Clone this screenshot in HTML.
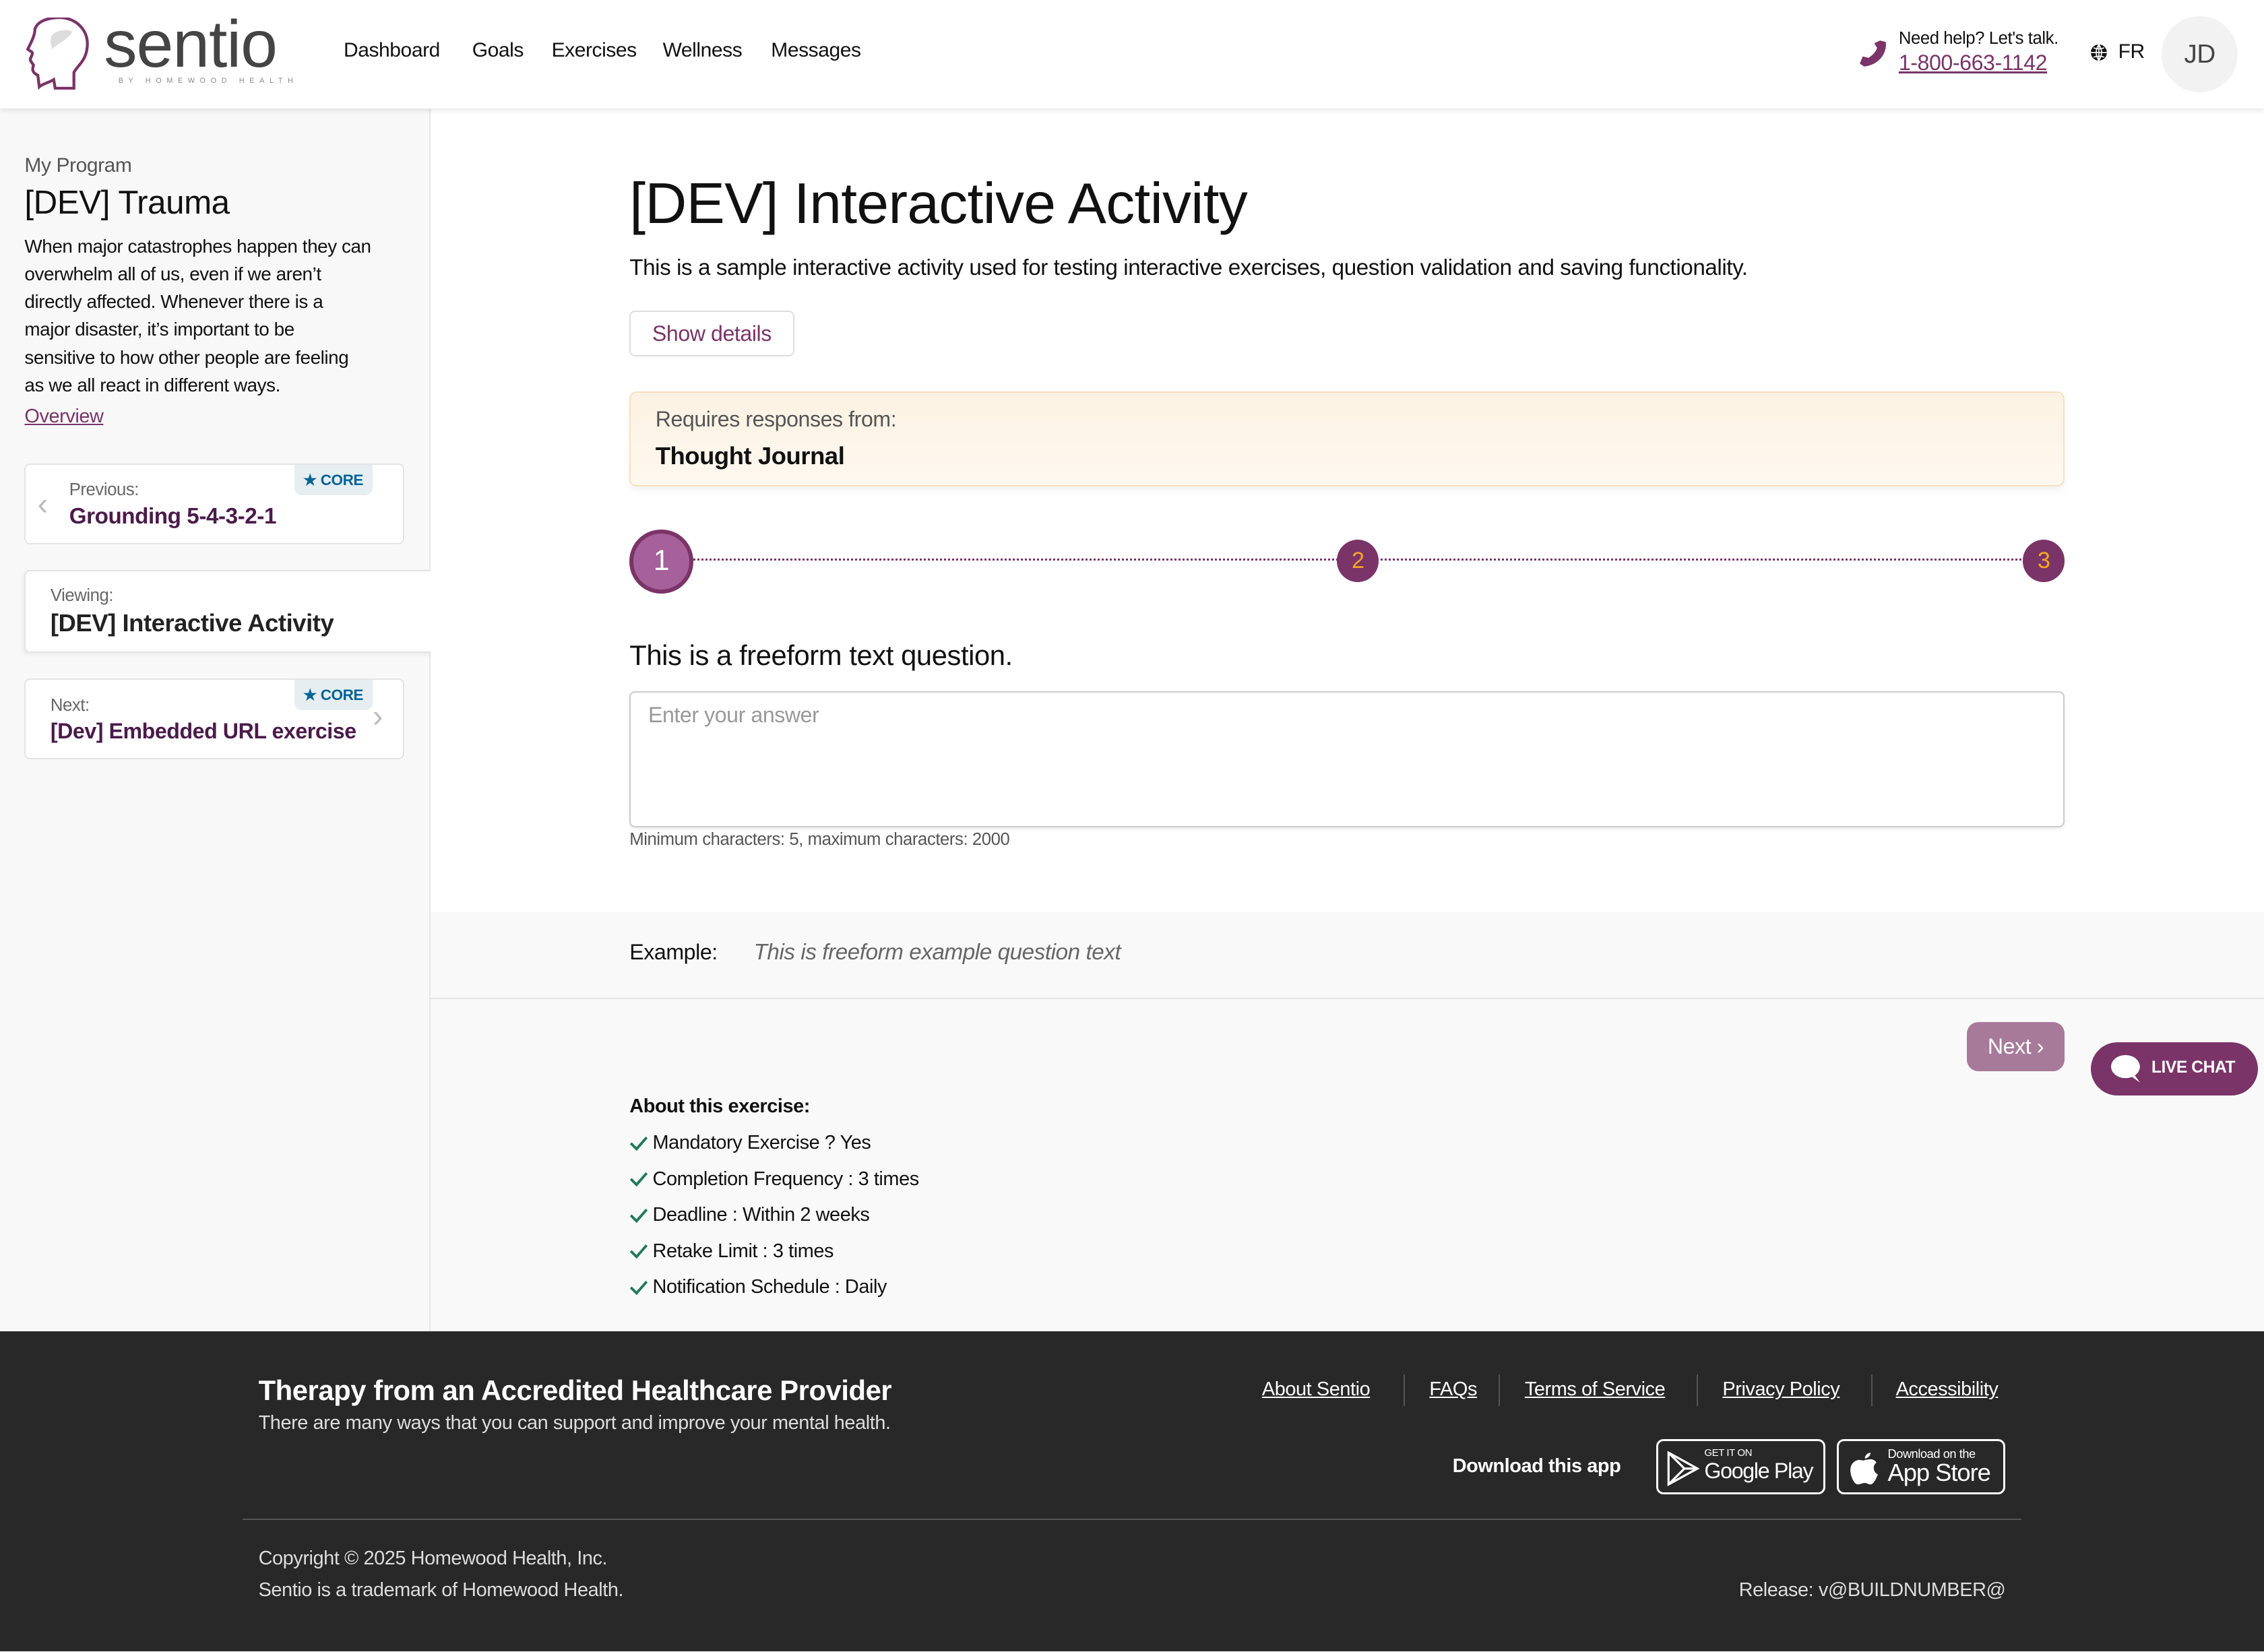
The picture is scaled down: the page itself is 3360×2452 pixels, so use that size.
<!DOCTYPE html>
<html><head><meta charset="utf-8">
<style>
html{zoom:2.142857}
*{box-sizing:border-box;margin:0;padding:0}
body{width:1568px;height:1144px;position:relative;overflow:hidden;font-family:"Liberation Sans",sans-serif;color:#222;background:#fff;letter-spacing:-0.2px}
.a{position:absolute;white-space:nowrap}
.hdr{position:absolute;left:0;top:0;width:1568px;height:75px;background:#fff;box-shadow:0 2px 3px rgba(0,0,0,.08);z-index:2}
.nav{font-size:14px;color:#111;top:27px}
.side{position:absolute;left:0;top:75px;width:298px;height:847px;background:#f8f8f8;border-right:1px solid #e6e6e6}
.card{position:absolute;background:#fff;border:1px solid #e4e4e4;border-radius:4px}
.core{position:absolute;right:21px;top:0;width:54px;height:21px;background:#e6eef2;border-radius:0 0 5px 5px;color:#006494;font-size:10.5px;font-weight:bold;line-height:21px;padding-left:6px}
.lbl{font-size:12px;color:#666}
.ttl{font-size:15.5px;font-weight:bold;color:#4a1b4a}
.main{position:absolute;left:298px;top:75px;width:1270px;height:847px;background:#fff}
.foot{position:absolute;left:0;top:922px;width:1568px;height:222px;background:#282828;color:#fff}
.fl{font-size:13.5px;text-decoration:underline;color:#fff;top:33px}
.sep{position:absolute;top:30px;width:1px;height:22px;background:#555}
.chk{font-size:13.5px;color:#111}
.chk svg{vertical-align:-2px;margin-right:3px}
</style></head><body>
<div class="hdr">
 <svg class="a" style="left:18px;top:12px" width="46" height="50" viewBox="0 0 46 50"><path d="M9 48 L8 40 C4 38 4 36 5 33 L3 30 C2 28 5 26 4 24 L1 22 C4 16 6 12 6 8 C8 2 16 0 24 0 C36 1 44 10 42 22 C41 30 35 34 33 38 L33 49 L20 49 L19 43 C16 45 11 46 9 48Z" fill="none" stroke="#7a3468" stroke-width="2"/><path d="M18 12 C22 8 30 8 32 10 C28 16 22 18 18 22 C17 18 16 15 18 12Z" fill="#ddd"/></svg>
 <div class="a" style="left:72px;top:4px;font-size:46px;color:#444;letter-spacing:-0.5px">sentio</div>
 <div class="a" style="left:82px;top:53px;font-size:5px;color:#888;letter-spacing:3.6px">BY HOMEWOOD HEALTH</div>
 <div class="a nav" style="left:238px">Dashboard</div>
 <div class="a nav" style="left:327px">Goals</div>
 <div class="a nav" style="left:382px">Exercises</div>
 <div class="a nav" style="left:459px">Wellness</div>
 <div class="a nav" style="left:534px">Messages</div>
 <svg class="a" style="left:1287px;top:27px" width="20" height="20" viewBox="0 0 20 20"><path d="M15 1 L19 2 C20 10 14 18 4 19 L1 17 L3 12 L7 13 C10 11 12 9 13 6 L11 3Z" fill="#7a3468"/></svg>
 <div class="a" style="left:1315px;top:20px;font-size:12px;color:#111">Need help? Let's talk.</div>
 <div class="a" style="left:1315px;top:35px;font-size:15px;color:#7a3468;text-decoration:underline">1-800-663-1142</div>
 <svg class="a" style="left:1447px;top:30px" width="13" height="13" viewBox="0 0 14 14"><circle cx="7" cy="7" r="6" fill="#111"/><path d="M1 7H13M7 1V13M3 3.5Q7 5 11 3.5M3 10.5Q7 9 11 10.5M7 1Q3 7 7 13M7 1Q11 7 7 13" stroke="#fff" stroke-width=".8" fill="none"/></svg>
 <div class="a" style="left:1467px;top:28px;font-size:14px;color:#111">FR</div>
 <div class="a" style="left:1497px;top:11px;width:53px;height:53px;border-radius:50%;background:#f2f2f2;font-size:18px;color:#444;text-align:center;line-height:53px">JD</div>
</div>

<div class="side">
 <div class="a" style="left:17px;top:32px;font-size:14px;color:#555">My Program</div>
 <div class="a" style="left:17px;top:52px;font-size:23px;color:#111">[DEV] Trauma</div>
 <div class="a" style="left:17px;top:86px;font-size:13px;line-height:19.2px;color:#111">When major catastrophes happen they can<br>overwhelm all of us, even if we aren’t<br>directly affected. Whenever there is a<br>major disaster, it’s important to be<br>sensitive to how other people are feeling<br>as we all react in different ways.</div>
 <div class="a" style="left:17px;top:206px;font-size:13.5px;color:#7a3468;text-decoration:underline">Overview</div>
 <div class="card" style="left:17px;top:246px;width:263px;height:56px">
  <div class="core">★ CORE</div>
  <div class="a" style="left:8px;top:14px;font-size:22px;color:#bbb">‹</div>
  <div class="a lbl" style="left:30px;top:11px">Previous:</div>
  <div class="a ttl" style="left:30px;top:27px">Grounding 5-4-3-2-1</div>
 </div>
 <div class="card" style="left:17px;top:320px;width:282px;height:57px;border-right:none;border-radius:4px 0 0 4px;box-shadow:-1px 1px 3px rgba(0,0,0,.06)">
  <div class="a lbl" style="left:17px;top:10px">Viewing:</div>
  <div class="a" style="left:17px;top:26px;font-size:17px;font-weight:bold;color:#222">[DEV] Interactive Activity</div>
 </div>
 <div class="card" style="left:17px;top:395px;width:263px;height:56px">
  <div class="core">★ CORE</div>
  <div class="a lbl" style="left:17px;top:11px">Next:</div>
  <div class="a ttl" style="left:17px;top:27px;font-size:15px">[Dev] Embedded URL exercise</div>
  <div class="a" style="left:240px;top:12px;font-size:22px;color:#bbb">›</div>
 </div>
</div>

<div class="main">
 <div class="a" style="left:138px;top:43px;font-size:40px;color:#111;letter-spacing:-0.3px">[DEV] Interactive Activity</div>
 <div class="a" style="left:138px;top:102px;font-size:15.5px;color:#111">This is a sample interactive activity used for testing interactive exercises, question validation and saving functionality.</div>
 <div class="a" style="left:138px;top:140px;width:114px;height:32px;border:1px solid #ddd;border-radius:4px;font-size:15px;color:#7a3468;line-height:30px;text-align:center">Show details</div>
 <div class="a" style="left:138px;top:196px;width:994px;height:66px;border:1px solid #f6e0c0;border-radius:5px;background:linear-gradient(#fcf2e3,#fff8ef);box-shadow:0 3px 5px rgba(0,0,0,.05)">
  <div class="a" style="left:17px;top:10px;font-size:15px;color:#555">Requires responses from:</div>
  <div class="a" style="left:17px;top:34px;font-size:17px;font-weight:bold;color:#111">Thought Journal</div>
 </div>
 <div class="a" style="left:180px;top:312px;width:950px;border-top:1.5px dotted #7a3468"></div>
 <div class="a" style="left:138px;top:292px;width:44px;height:44px;border-radius:50%;background:#a6609a;border:3px solid #7a3468;color:#fff;font-size:20px;text-align:center;line-height:38px">1</div>
 <div class="a" style="left:628px;top:299px;width:29px;height:29px;border-radius:50%;background:#7a3468;color:#f5a623;font-size:16px;text-align:center;line-height:29px">2</div>
 <div class="a" style="left:1103px;top:299px;width:29px;height:29px;border-radius:50%;background:#7a3468;color:#f5a623;font-size:16px;text-align:center;line-height:29px">3</div>
 <div class="a" style="left:138px;top:368px;font-size:19.5px;color:#111">This is a freeform text question.</div>
 <div class="a" style="left:138px;top:404px;width:994px;height:94px;border:1px solid #ccc;border-radius:4px;box-shadow:0 1px 2px rgba(0,0,0,.08)">
  <div class="a" style="left:12px;top:7px;font-size:15px;color:#999">Enter your answer</div>
 </div>
 <div class="a" style="left:138px;top:500px;font-size:12px;color:#555">Minimum characters: 5, maximum characters: 2000</div>
 <div class="a" style="left:0;top:557px;width:1270px;height:290px;background:#f9f9f9"></div>
 <div class="a" style="left:0;top:616px;width:1270px;height:1px;background:#e6e6e6"></div>
 <div class="a" style="left:138px;top:576px;font-size:15px;color:#111">Example:</div>
 <div class="a" style="left:224px;top:576px;font-size:15.5px;color:#666;font-style:italic">This is freeform example question text</div>
 <div class="a" style="left:1064px;top:633px;width:68px;height:34px;border-radius:8px;background:#a87a9a;color:#fff;font-size:15px;text-align:center;line-height:34px">Next ›</div>
 <div class="a" style="left:138px;top:684px;font-size:13.5px;font-weight:bold;color:#111">About this exercise:</div>
 <div class="a chk" style="left:138px;top:709px"><svg width="13" height="12" viewBox="0 0 13 12"><path d="M1 6L5 10L12 2" stroke="#1f7a5a" stroke-width="1.8" fill="none"/></svg>Mandatory Exercise ? Yes</div>
 <div class="a chk" style="left:138px;top:734px"><svg width="13" height="12" viewBox="0 0 13 12"><path d="M1 6L5 10L12 2" stroke="#1f7a5a" stroke-width="1.8" fill="none"/></svg>Completion Frequency : 3 times</div>
 <div class="a chk" style="left:138px;top:759px"><svg width="13" height="12" viewBox="0 0 13 12"><path d="M1 6L5 10L12 2" stroke="#1f7a5a" stroke-width="1.8" fill="none"/></svg>Deadline : Within 2 weeks</div>
 <div class="a chk" style="left:138px;top:784px"><svg width="13" height="12" viewBox="0 0 13 12"><path d="M1 6L5 10L12 2" stroke="#1f7a5a" stroke-width="1.8" fill="none"/></svg>Retake Limit : 3 times</div>
 <div class="a chk" style="left:138px;top:809px"><svg width="13" height="12" viewBox="0 0 13 12"><path d="M1 6L5 10L12 2" stroke="#1f7a5a" stroke-width="1.8" fill="none"/></svg>Notification Schedule : Daily</div>
</div>

<div class="a" style="left:1448px;top:722px;width:116px;height:37px;border-radius:19px;background:#7a3468;z-index:3">
 <svg class="a" style="left:14px;top:9px" width="22" height="20" viewBox="0 0 22 20"><ellipse cx="10" cy="8" rx="10" ry="8" fill="#fff"/><path d="M13 14L20 19L15 12Z" fill="#fff"/></svg>
 <div class="a" style="left:42px;top:11px;font-size:11.5px;font-weight:bold;color:#fff">LIVE CHAT</div>
</div>

<div class="foot">
 <div class="a" style="left:179px;top:30px;font-size:19.5px;font-weight:bold">Therapy from an Accredited Healthcare Provider</div>
 <div class="a" style="left:179px;top:56px;font-size:13.5px;color:#ddd">There are many ways that you can support and improve your mental health.</div>
 <div class="a fl" style="left:874px">About Sentio</div>
 <div class="sep" style="left:972px"></div>
 <div class="a fl" style="left:990px">FAQs</div>
 <div class="sep" style="left:1038px"></div>
 <div class="a fl" style="left:1056px">Terms of Service</div>
 <div class="sep" style="left:1175px"></div>
 <div class="a fl" style="left:1193px">Privacy Policy</div>
 <div class="sep" style="left:1296px"></div>
 <div class="a fl" style="left:1313px">Accessibility</div>
 <div class="a" style="left:1006px;top:86px;font-size:13.5px;font-weight:bold">Download this app</div>
 <div class="a" style="left:1147px;top:75px;width:117px;height:38px;border:1.5px solid #fff;border-radius:5px">
  <svg class="a" style="left:5px;top:7px" width="24" height="24" viewBox="0 0 24 24"><path d="M2 1L2 23L22 12Z M2 1L13 12L2 23 M13 12L22 12" stroke="#fff" stroke-width="1.5" fill="none"/></svg>
  <div class="a" style="left:32px;top:4px;font-size:7px">GET IT ON</div>
  <div class="a" style="left:32px;top:12px;font-size:15px;letter-spacing:-0.6px">Google Play</div>
 </div>
 <div class="a" style="left:1272px;top:75px;width:117px;height:38px;border:1.5px solid #fff;border-radius:5px">
  <svg class="a" style="left:7px;top:7px" width="22" height="24" viewBox="0 0 22 24"><path d="M11 6C13 6 15 5 17 6C19 7 19 8 19 8C16 10 17 15 20 16C19 19 17 23 15 23C13 23 13 22 11 22C9 22 8 23 6 23C4 23 1 18 1 13C1 8 5 6 7 6C9 6 10 7 11 6Z M11 5C11 3 13 1 15 1C15 3 13 5 11 5Z" fill="#fff"/></svg>
  <div class="a" style="left:34px;top:4px;font-size:8.5px">Download on the</div>
  <div class="a" style="left:34px;top:12px;font-size:17px;letter-spacing:-0.5px">App Store</div>
 </div>
 <div class="a" style="left:168px;top:130px;width:1232px;height:1px;background:#555"></div>
 <div class="a" style="left:179px;top:150px;font-size:13.5px;color:#ddd">Copyright © 2025 Homewood Health, Inc.</div>
 <div class="a" style="left:179px;top:172px;font-size:13.5px;color:#ddd">Sentio is a trademark of Homewood Health.</div>
 <div class="a" style="right:179px;top:172px;font-size:13.5px;color:#ddd">Release: v@BUILDNUMBER@</div>
</div>
</body></html>
